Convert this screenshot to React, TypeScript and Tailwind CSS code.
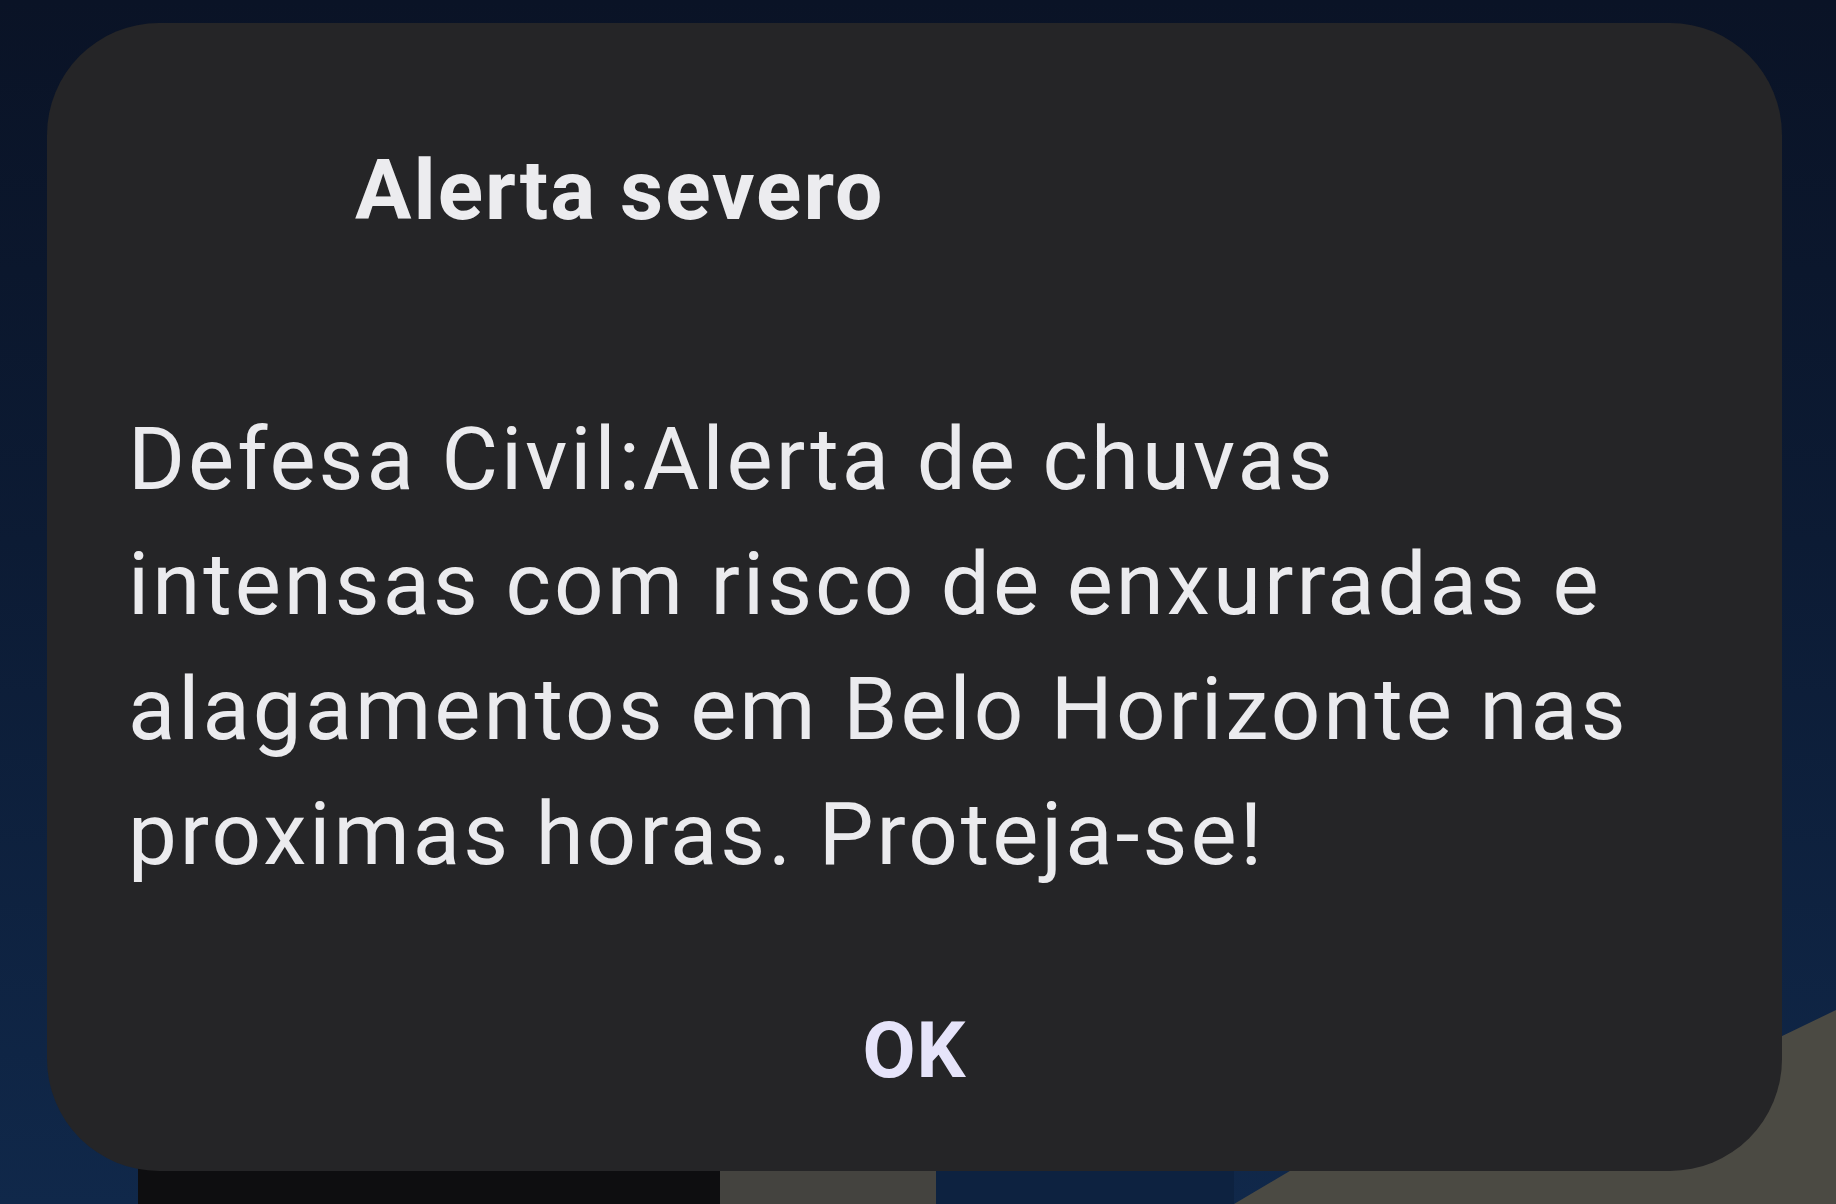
import React from 'react';

const lines = [
  'Defesa Civil:Alerta de chuvas',
  'intensas com risco de enxurradas e',
  'alagamentos em Belo Horizonte nas',
  'proximas horas. Proteja-se!',
];

const AlertDialog: React.FC = () => {
  return (
    <div className="relative z-10 flex flex-col rounded-[112px] bg-[#252527] pb-[81px] pt-[126px]">
      <h2 className="pl-[308px] text-[84px] font-bold leading-none tracking-[2px] text-[#ececef]">Alerta severo</h2>

      <div className="mt-[164px] pl-[81px] text-[87px] leading-[125px] tracking-[3px] text-[#ebebee]">
        {lines.map((line) => (
          <div key={line} className="whitespace-nowrap">
            {line}
          </div>
        ))}
      </div>

      <div className="mt-[116px] flex justify-center">
        <button className="text-[77px] font-bold leading-none tracking-[1px] text-[#e6e4fa]">OK</button>
      </div>
    </div>
  );
};

const App: React.FC = () => {
  return (
    <div className="h-[1204px] w-full overflow-hidden bg-[linear-gradient(180deg,#0a1326_0%,#0c1b34_45%,#10284a_100%)] font-['Roboto',sans-serif]">
      <div className="pl-[47px] pr-[54px] pt-[23px]">
        <AlertDialog />
      </div>

      {/* photo behind the dialog, only the bottom edge shows */}
      <div className="-mt-[161px] flex h-[194px] items-end">
        <div className="h-full w-[138px]" />
        <div className="h-[150px] w-[582px] bg-[#0e0e10]" />
        <div className="h-[150px] w-[216px] bg-[#44433f]" />
        <div className="h-[150px] w-[298px] bg-[#0d2240]" />
        <div className="h-full flex-1 bg-[#4b4a43] [clip-path:polygon(0_100%,12%_78%,55%_78%,88%_18%,100%_0,100%_100%)]" />
      </div>
    </div>
  );
};

export default App;
